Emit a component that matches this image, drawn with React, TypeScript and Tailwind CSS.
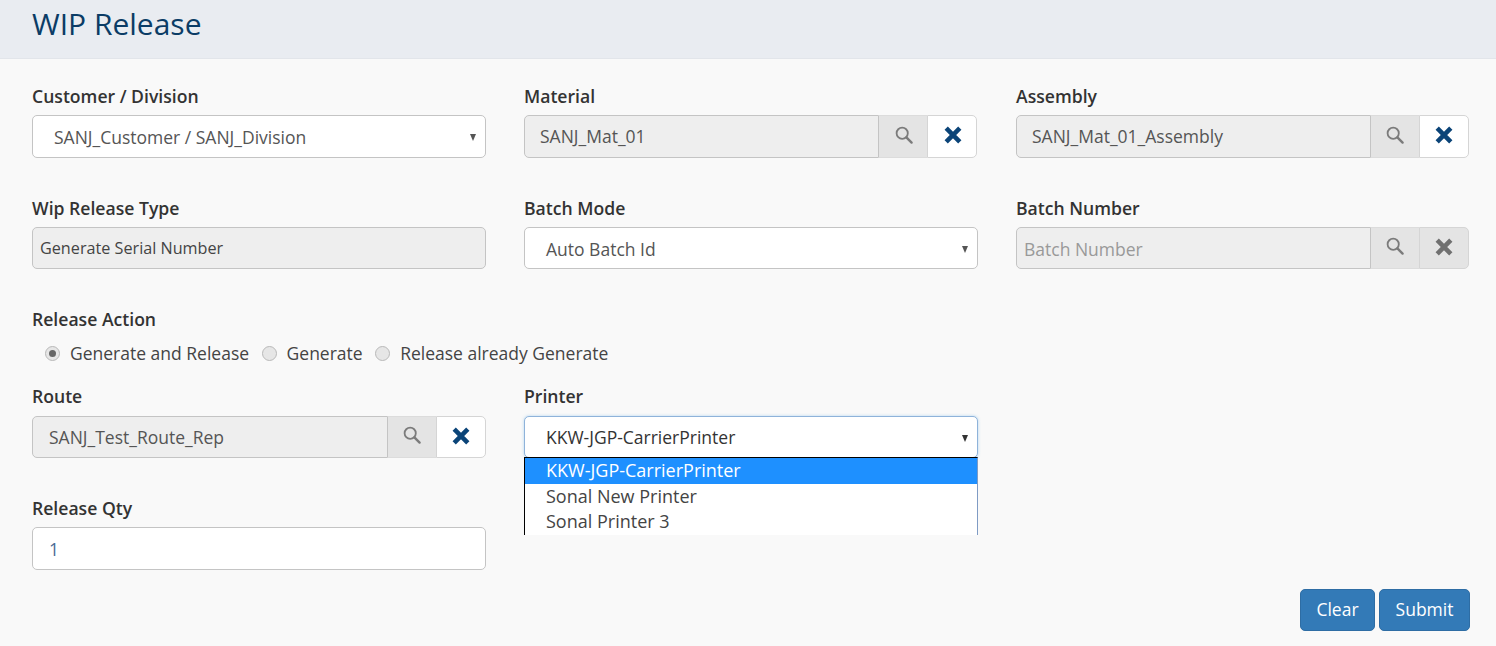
import React from 'react';

const SearchIcon = ({ className }: { className: string }) => (
  <svg width="20" height="20" viewBox="0 0 20 20" fill="none" className={className}>
    <circle cx="8.2" cy="8.2" r="5.6" stroke="currentColor" strokeWidth="1.8" />
    <path d="M12.4 12.4L17.6 17.6" stroke="currentColor" strokeWidth="2.4" strokeLinecap="round" />
  </svg>
);

const CloseIcon = ({ className }: { className: string }) => (
  <svg width="20" height="20" viewBox="0 0 20 20" fill="none" className={className}>
    <path d="M3.2 3.2L16.8 16.8M16.8 3.2L3.2 16.8" stroke="currentColor" strokeWidth="4.6" />
  </svg>
);

const Label = ({ children }: { children: React.ReactNode }) => (
  <div className="h-[19px] text-[17.6px] leading-[19px] font-semibold text-[#333333]">{children}</div>
);

const Caret = ({ dark }: { dark?: boolean }) => (
  <span
    className={`absolute right-[9px] top-[18px] h-0 w-0 border-x-[3.5px] border-t-[7px] border-x-transparent ${
      dark ? 'border-t-[#333333]' : 'border-t-[#555555]'
    }`}
  />
);

const SelectBox = ({ value, focused, height }: { value: string; focused?: boolean; height: string }) => (
  <div
    className={`relative flex ${height} items-center rounded-[5px] border bg-white pl-[21px] text-[17.5px] ${
      focused
        ? 'border-[#8fb3da] text-[#333333] shadow-[0_0_3px_rgba(102,175,233,0.5)]'
        : 'border-[#c4c4c4] pt-[2px] text-[#555555]'
    }`}
  >
    {value}
    <Caret dark={focused} />
  </div>
);

const Lookup = ({ value, placeholder, off, inputPad, height, iconNudge = '' }: { value?: string; placeholder?: string; off?: boolean; inputPad: string; height: string; iconNudge?: string }) => (
  <div className={`flex ${height} text-[17.5px]`}>
    <div
      className={`flex min-w-0 flex-1 items-center rounded-l-[5px] border border-[#c4c4c4] bg-[#eeeeee] ${inputPad} ${
        value ? 'text-[#555555]' : 'pt-[2px] text-[#999999]'
      }`}
    >
      {value ?? placeholder}
    </div>
    <div className="flex w-[48px] items-center justify-center border-y border-[#dcdcdc] bg-[#e4e4e4] text-[#7b7b7b]">
      <SearchIcon className={`-mt-[4px] ${iconNudge}`} />
    </div>
    <div
      className={`flex w-[50px] items-center justify-center rounded-r-[5px] border border-[#d5d5d5] ${
        off ? 'bg-[#e4e4e4] text-[#707070]' : 'bg-white text-[#0b4478]'
      }`}
    >
      <CloseIcon className={`-mt-[3px] ${iconNudge}`} />
    </div>
  </div>
);

const Radio = ({ label, checked }: { label: string; checked?: boolean }) => (
  <div className="flex items-center">
    <span className="flex h-[15px] w-[15px] items-center justify-center rounded-full border border-[#b9b9b9] bg-[#e6e6e6]">
      {checked && <span className="h-[7px] w-[7px] rounded-full bg-[#666666]" />}
    </span>
    <span className="ml-[10px] text-[#444444]">{label}</span>
  </div>
);

const PrintBtn = ({ label, width }: { label: string; width: string }) => (
  <button className={`h-[42px] ${width} rounded-[5px] border border-[#2e6da4] bg-[#337ab7] pb-[2px] text-[17.5px] text-white`}>
    {label}
  </button>
);

const rowClass = 'grid grid-cols-[454px_454px_453px] gap-x-[38px]';

export default function App() {
  return (
    <div className="h-[646px] overflow-hidden bg-[#f9f9f9] font-['Open_Sans',sans-serif] text-[#333333]">
      <div className="flex h-[59px] items-start border-b border-[#e2e5ea] bg-[#e9ecf1] pl-[32px]">
        <h1 className="mt-[3px] text-[30px] leading-[41px] font-normal text-[#0b3c66]">WIP Release</h1>
      </div>

      <div className="pt-[28px] pr-[27px] pl-[32px]">
        <div className={rowClass}>
          <div>
            <Label>Customer / Division</Label>
            <div className="mt-[9px]"><SelectBox value="SANJ_Customer / SANJ_Division" height="h-[43px]" /></div>
          </div>
          <div>
            <Label>Material</Label>
            <div className="mt-[9px] mr-[1px]"><Lookup value="SANJ_Mat_01" inputPad="pl-[15px]" height="h-[43px]" iconNudge="ml-[2px]" /></div>
          </div>
          <div>
            <Label>Assembly</Label>
            <div className="mt-[9px]"><Lookup value="SANJ_Mat_01_Assembly" inputPad="pl-[15px]" height="h-[43px]" /></div>
          </div>
        </div>

        <div className={`mt-[41px] ${rowClass}`}>
          <div>
            <Label>Wip Release Type</Label>
            <div className="mt-[9px] flex h-[42px] items-center rounded-[5px] border border-[#c4c4c4] bg-[#eeeeee] pl-[7px] text-[16.2px] text-[#444444]">
              Generate Serial Number
            </div>
          </div>
          <div>
            <Label>Batch Mode</Label>
            <div className="mt-[9px]"><SelectBox value="Auto Batch Id" height="h-[42px]" /></div>
          </div>
          <div>
            <Label>Batch Number</Label>
            <div className="mt-[9px]"><Lookup placeholder="Batch Number" off inputPad="pl-[7px]" height="h-[42px]" /></div>
          </div>
        </div>

        <div className="mt-[41px]">
          <Label>Release Action</Label>
          <div className="mt-[14px] flex h-[20px] items-center gap-x-[12.5px] pl-[13px] text-[17.5px]">
            <Radio label="Generate and Release" checked />
            <Radio label="Generate" />
            <Radio label="Release already Generate" />
          </div>
        </div>

        <div className={`mt-[24px] ${rowClass}`}>
          <div>
            <Label>Route</Label>
            <div className="mt-[10px]"><Lookup value="SANJ_Test_Route_Rep" inputPad="pl-[16px]" height="h-[42px]" /></div>
          </div>
          <div className="relative">
            <Label>Printer</Label>
            <div className="mt-[10px]"><SelectBox value="KKW-JGP-CarrierPrinter" focused height="h-[42px]" /></div>
            <div className="absolute top-[70px] right-0 left-0 z-10 h-[78px] overflow-hidden border-t border-r border-l border-t-black border-r-[#7f9bc4] border-l-black bg-white text-[18px] leading-[25px] text-[#444444]">
              <div className="h-[26px] bg-[#1e90ff] pl-[21px] text-white">KKW-JGP-CarrierPrinter</div>
              <div className="pl-[21px]">Sonal New Printer</div>
              <div className="pl-[21px]">Sonal Printer 3</div>
            </div>
          </div>
        </div>

        <div className={`mt-[41px] ${rowClass}`}>
          <div>
            <Label>Release Qty</Label>
            <div className="mt-[9px] flex h-[43px] items-center rounded-[5px] border border-[#c4c4c4] bg-white pt-[2px] pl-[16px] text-[17.5px] text-[#4a6a94]">
              1
            </div>
          </div>
        </div>

        <div className="-mr-[1px] mt-[19px] flex justify-end gap-x-[4px]">
          <PrintBtn label="Clear" width="w-[75px]" />
          <PrintBtn label="Submit" width="w-[91px]" />
        </div>
      </div>
    </div>
  );
}
